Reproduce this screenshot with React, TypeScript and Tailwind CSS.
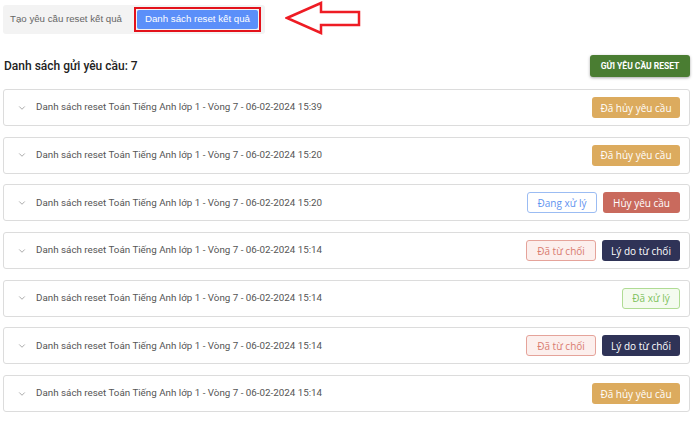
import { ChevronDown } from 'lucide-react';

type Status = 'cancelled' | 'processing' | 'rejected' | 'done';

type Request = {
  time: string;
  status: Status;
};

const REQUESTS: Request[] = [
  { time: '15:39', status: 'cancelled' },
  { time: '15:20', status: 'cancelled' },
  { time: '15:20', status: 'processing' },
  { time: '15:14', status: 'rejected' },
  { time: '15:14', status: 'done' },
  { time: '15:14', status: 'rejected' },
  { time: '15:14', status: 'cancelled' },
];

const badge =
  'h-[21px] shrink-0 whitespace-nowrap rounded-[3px] text-[10px] leading-none flex items-center justify-center font-["Open_Sans",sans-serif]';

function Actions({ status }: { status: Status }) {
  if (status === 'cancelled') {
    return <span className={`${badge} w-[88px] bg-[#dcab5e] text-white`}>Đã hủy yêu cầu</span>;
  }
  if (status === 'processing') {
    return (
      <>
        <span className={`${badge} w-[70px] border border-[#9bbcf3] bg-white text-[#5f93ef]`}>Đang xử lý</span>
        <span className={`${badge} w-[77px] bg-[#c96a5d] text-white`}>Hủy yêu cầu</span>
      </>
    );
  }
  if (status === 'rejected') {
    return (
      <>
        <span className={`${badge} w-[70px] border border-[#e5a39a] bg-[#fcefed] text-[#d97b6f]`}>Đã từ chối</span>
        <span className={`${badge} w-[78px] bg-[#2f3357] text-white`}>Lý do từ chối</span>
      </>
    );
  }
  return <span className={`${badge} w-[58px] border border-[#b0dc94] bg-[#f4fbef] text-[#7dc15c]`}>Đã xử lý</span>;
}

export default function App() {
  return (
    <div className="w-[695px] h-[428px] bg-white font-['Roboto',sans-serif] overflow-hidden">
      <div className="flex items-center pt-[3px] pl-[3px]">
        <div className="flex items-center h-[29px] w-[262px] bg-[#f3f3f3] rounded-[3px] font-['Liberation_Sans',Arial,sans-serif] whitespace-nowrap">
          <span className="pl-[7px] w-[131px] text-[9.7px] text-[#666]">Tạo yêu cầu reset kết quả</span>
          <div className="border-2 border-[#e3121b] p-[1px] h-[25px] flex">
            <span className="flex items-center justify-center w-[121px] bg-[#5b8ff9] rounded-[2px] text-[9.7px] text-white">
              Danh sách reset kết quả
            </span>
          </div>
        </div>
        <svg width="78" height="34" viewBox="0 0 78 34" className="ml-[20px] -mt-[2px]">
          <path
            d="M2 17 L36 2 L36 11 L74 11 L74 24 L36 24 L36 32 Z"
            fill="none"
            stroke="#ee1c24"
            strokeWidth="2.5"
            strokeLinejoin="miter"
          />
        </svg>
      </div>

      <div className="flex items-center justify-between pl-[4px] pr-[5px] mt-[20px]">
        <h2 className="text-[12px] font-medium text-[#222]">Danh sách gửi yêu cầu: 7</h2>
        <button
          type="button"
          className="w-[100px] h-[22px] rounded-[3px] bg-[#4a7d32] text-white text-[8.5px] font-bold uppercase whitespace-nowrap shadow-[0_1px_3px_rgba(0,0,0,0.35)]"
        >
          Gửi yêu cầu reset
        </button>
      </div>

      <ul className="flex flex-col gap-[10.7px] mt-[12px] pl-[3px] pr-[5px]">
        {REQUESTS.map((r, i) => (
          <li
            key={i}
            className="flex items-center h-[37px] rounded-[3px] border border-[#dcdcdc] pl-[13px] pr-[9px]"
          >
            <ChevronDown size={10} strokeWidth={1.5} className="text-[#777] shrink-0" />
            <span className="ml-[9px] text-[9.8px] text-[#555] whitespace-nowrap">
              Danh sách reset Toán Tiếng Anh lớp 1 - Vòng 7 - 06-02-2024 {r.time}
            </span>
            <div className="ml-auto flex items-center gap-[6px]">
              <Actions status={r.status} />
            </div>
          </li>
        ))}
      </ul>
    </div>
  );
}
